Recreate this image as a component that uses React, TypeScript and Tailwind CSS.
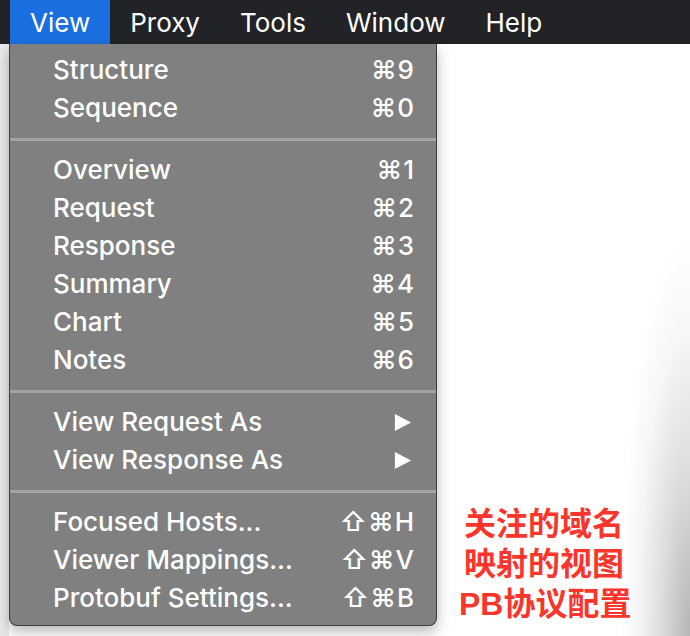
import React from "react";

type Item = { label: string; keys?: string; submenu?: boolean };

const groups: Item[][] = [
  [
    { label: "Structure", keys: "⌘9" },
    { label: "Sequence", keys: "⌘0" },
  ],
  [
    { label: "Overview", keys: "⌘1" },
    { label: "Request", keys: "⌘2" },
    { label: "Response", keys: "⌘3" },
    { label: "Summary", keys: "⌘4" },
    { label: "Chart", keys: "⌘5" },
    { label: "Notes", keys: "⌘6" },
  ],
  [
    { label: "View Request As", submenu: true },
    { label: "View Response As", submenu: true },
  ],
  [
    { label: "Focused Hosts...", keys: "⇧⌘H" },
    { label: "Viewer Mappings...", keys: "⇧⌘V" },
    { label: "Protobuf Settings...", keys: "⇧⌘B" },
  ],
];

const menus = ["View", "Proxy", "Tools", "Window", "Help"];

function MenuRow({ item }: { item: Item }) {
  return (
    <div className="flex h-[38px] items-center justify-between pl-[43px] pr-[21px] text-[26px] font-medium leading-none text-white">
      <span>{item.label}</span>
      {item.submenu ? (
        <svg viewBox="0 0 20 20" className="mr-[3px] h-[19px] w-[19px]" aria-hidden="true">
          <path d="M2 1 L19 10 L2 19 Z" fill="currentColor" />
        </svg>
      ) : (
        <span className="tracking-[1px]">{item.keys}</span>
      )}
    </div>
  );
}

export default function App() {
  return (
    <div className="relative h-[636px] w-[690px] overflow-hidden bg-white font-['Inter','Liberation_Sans',sans-serif]">
      <div className="flex h-[44px] items-stretch bg-[#222326] pl-[10px] text-[26px] text-white">
        {menus.map((m, i) => (
          <div
            key={m}
            className={`flex items-center px-[20px] ${i === 0 ? "bg-[#1a6fe0]" : ""}`}
          >
            {m}
          </div>
        ))}
      </div>

      <div className="flex h-[592px]">
        <div className="w-[9px] bg-[#e9e9e9]" />
        <div className="flex-1 bg-[radial-gradient(ellipse_70px_400px_at_100%_100%,#b5b5b5_0%,#dcdcdc_40%,#f6f6f6_75%,#ffffff_100%)]" />
      </div>

      <div className="absolute left-[9px] top-[44px] w-[428px] rounded-b-[8px] border border-t-0 border-[#3c3c3c] bg-[#808080] pb-[8px] pt-[7px] shadow-[0_6px_14px_rgba(0,0,0,0.28)]">
        {groups.map((group, gi) => (
          <div key={gi}>
            {gi > 0 && <div className="mb-[10px] mt-[11px] h-[3px] bg-[#a3a3a3]" />}
            {group.map((item) => (
              <MenuRow key={item.label} item={item} />
            ))}
          </div>
        ))}
      </div>

      <div className="absolute left-[459px] top-[504px] text-[32px] font-bold leading-[40px] text-[#f9352c] font-['Liberation_Sans','Noto_Sans_CJK_SC',sans-serif]">
        <div className="pl-[5px]">关注的域名</div>
        <div className="pl-[5px]">映射的视图</div>
        <div>PB协议配置</div>
      </div>
    </div>
  );
}
